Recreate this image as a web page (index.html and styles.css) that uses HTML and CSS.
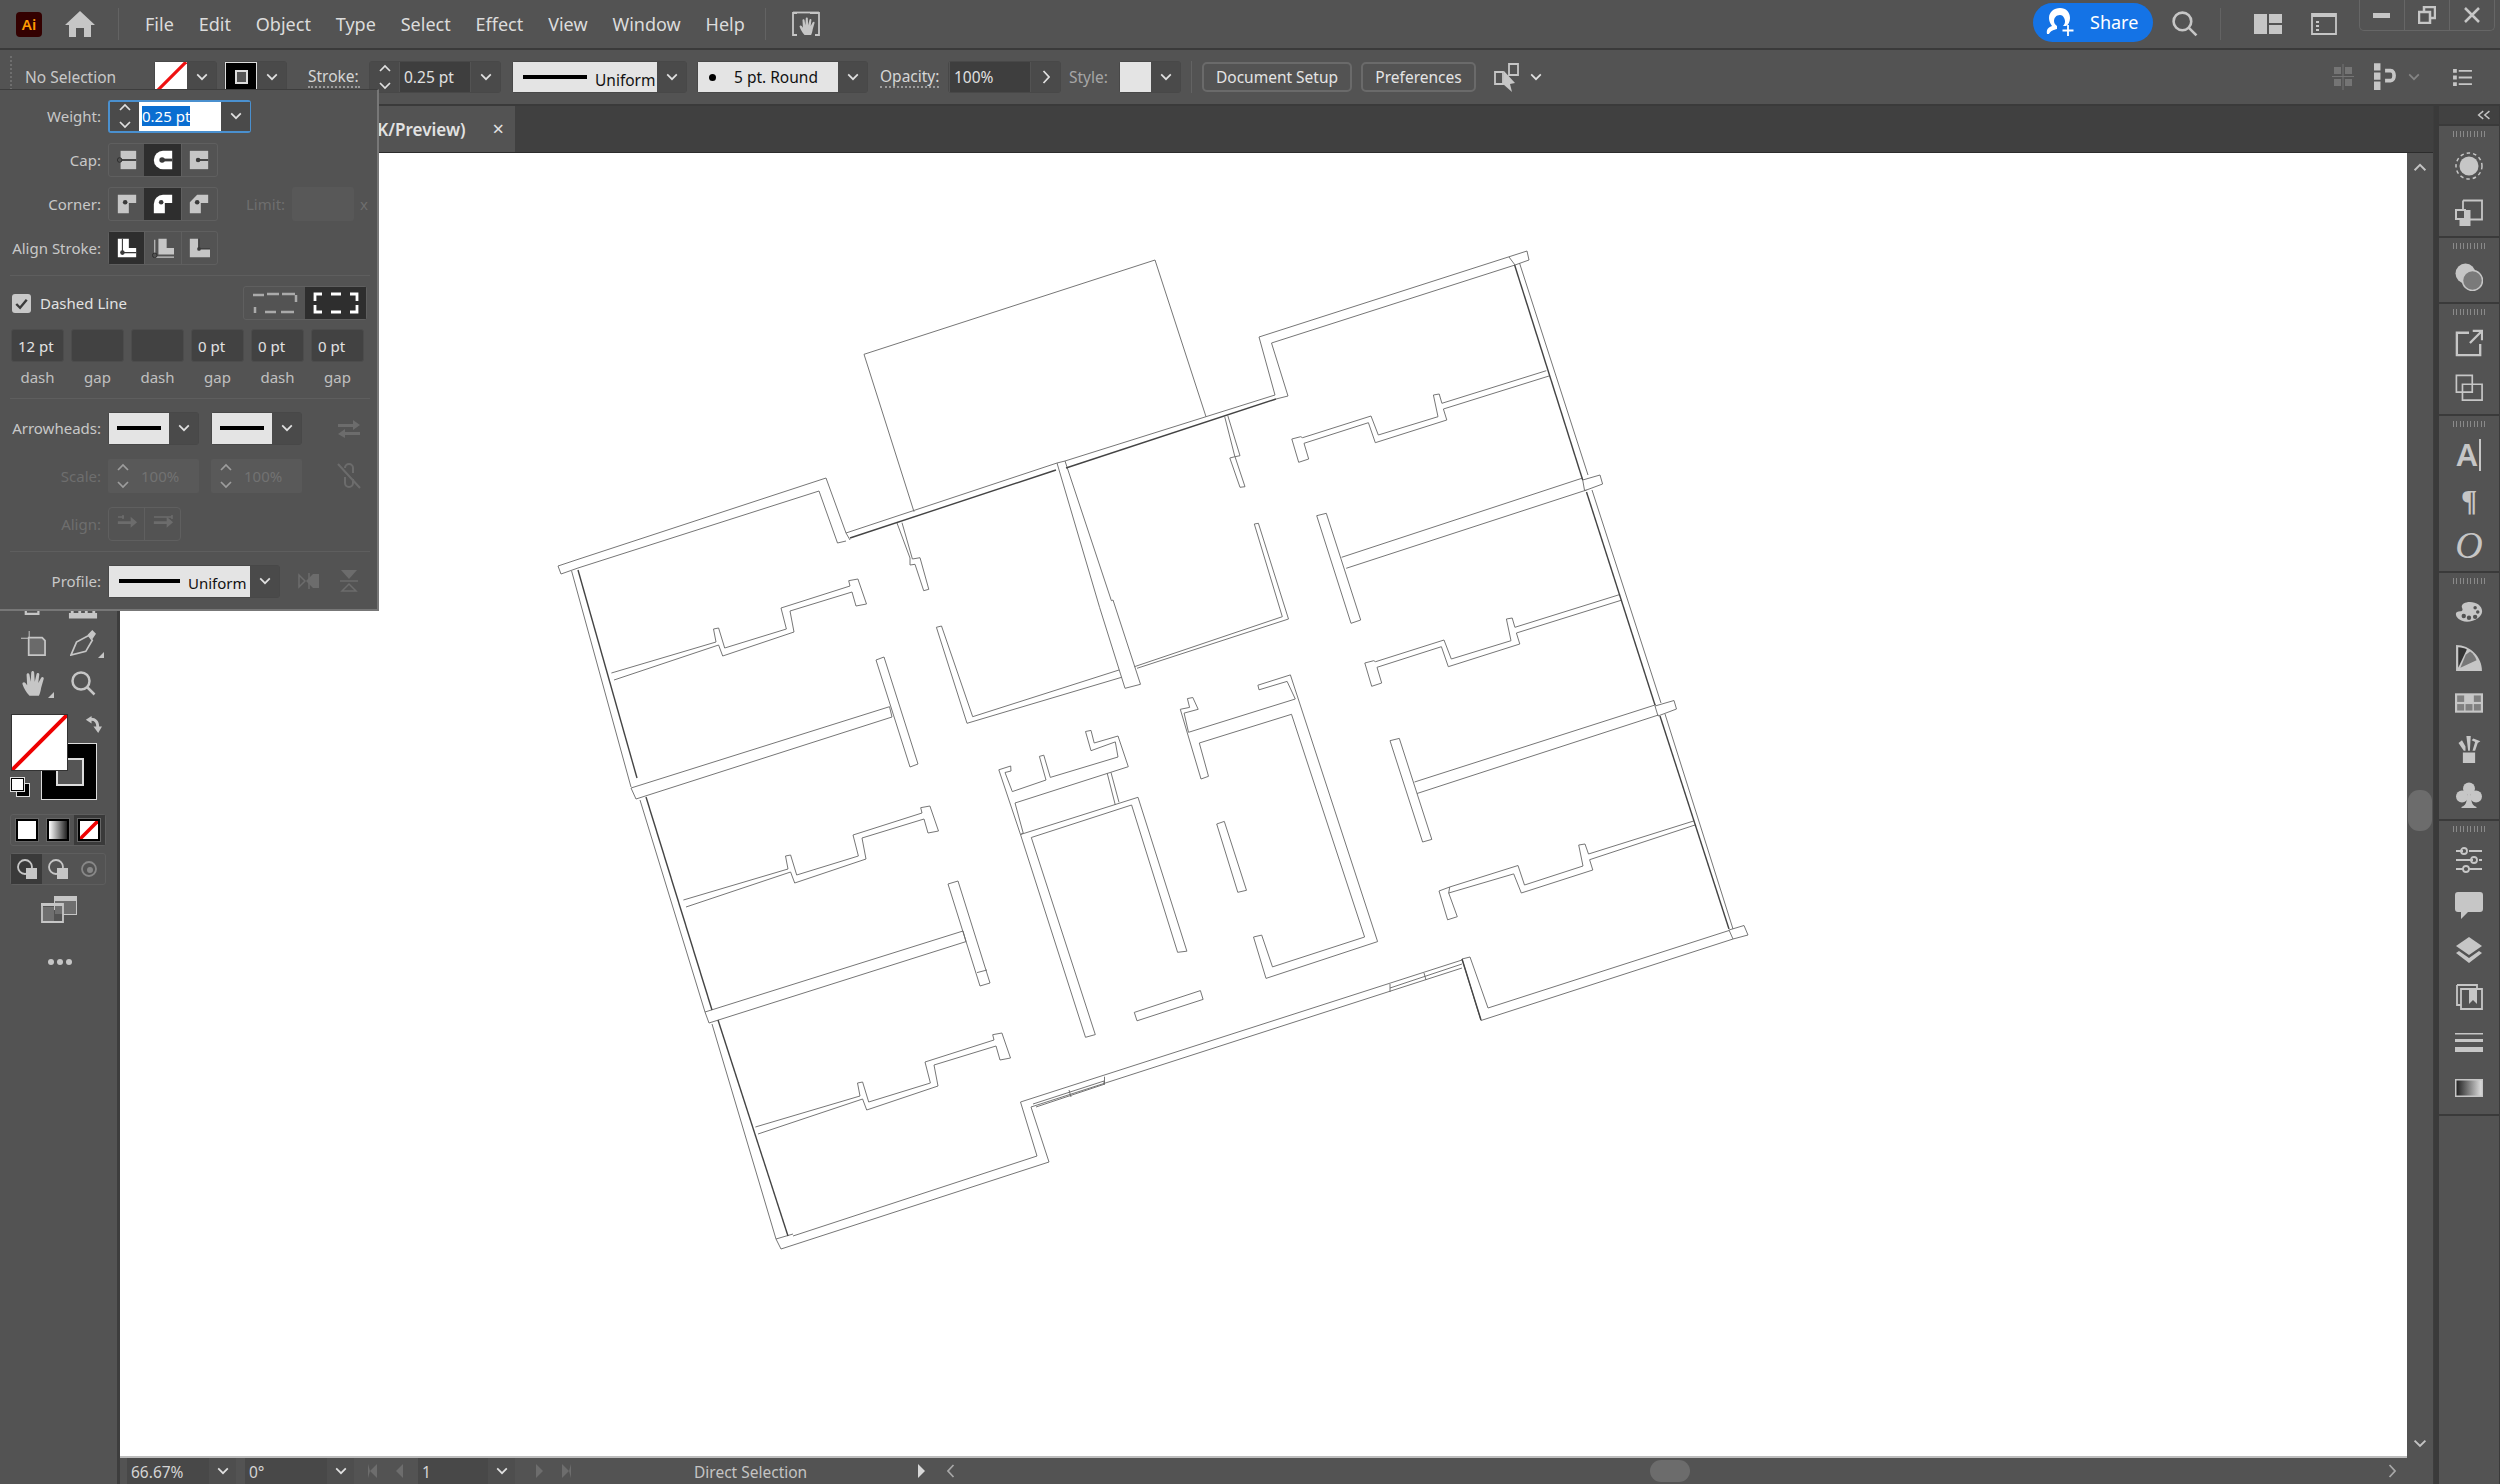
FILE: index.html
```html
<!DOCTYPE html>
<html lang="en">
<head>
<meta charset="utf-8">
<title>Illustrator</title>
<link rel="stylesheet" href="styles.css">
</head>
<body>
<svg class="defs" width="0" height="0" aria-hidden="true">
  <defs>
    <symbol id="chev" viewBox="0 0 12 8"><path class="ln" d="M1.2 1.4L6 6.2l4.8-4.8"/></symbol>
    <symbol id="up" viewBox="0 0 12 8"><path class="ln" d="M1.2 6.4L6 1.6l4.8 4.8"/></symbol>
    <symbol id="stepper" viewBox="0 0 14 28"><path class="ln" d="M2 8l5-5 5 5M2 20l5 5 5-5"/></symbol>
    <symbol id="home" viewBox="0 0 30 26"><path d="M15 0l15 14h-4v12h-7v-9h-8v9H4V14H0z"/></symbol>
    <symbol id="hand" viewBox="0 0 22 24"><path d="M8 23C5 20 3 16 2 13c-.5-1.5 1.5-2.5 2.5-1L6 14 5.500 5c0-1.800 2.300-1.800 2.500 0L9 11l.5-8c.1-1.800 2.400-1.800 2.500 0l.5 8L14 4.500c.3-1.700 2.500-1.400 2.400.3L15.500 12 18 7.500c.7-1.400 2.600-.6 2.200.9L18 16c-.5 3-1 5-2 7z"/></symbol>
    <symbol id="mag" viewBox="0 0 26 26"><circle class="ln2" cx="11" cy="11" r="8.500"/><path class="ln2" d="M17 17l7.500 7.500"/></symbol>
    <symbol id="capA" viewBox="0 0 24 24"><path d="M5 2h17v20H5z"/><path class="dk" d="M5 11h17v2H5z"/><circle class="dkring" cx="4" cy="12" r="2.500"/></symbol>
    <symbol id="capB" viewBox="0 0 24 24"><path d="M12 2h10v20H12a10 10 0 0 1 0-20z"/><path class="dk" d="M12 10.500h10v3H12z"/><circle class="dk" cx="11" cy="12" r="3"/></symbol>
    <symbol id="capC" viewBox="0 0 24 24"><path d="M2 2h20v20H2z"/><path class="dk" d="M11 11h11v2H11z"/><circle class="dk" cx="11" cy="12" r="2.500"/></symbol>
    <symbol id="corA" viewBox="0 0 24 24"><path d="M2 2h20v9h-8v11H2z"/><circle class="dk" cx="10" cy="10" r="2.500"/></symbol>
    <symbol id="corB" viewBox="0 0 24 24"><path d="M12 2h10v9h-8v11H2V12A10 10 0 0 1 12 2z"/><circle class="dk" cx="10" cy="10" r="2.500"/></symbol>
    <symbol id="corC" viewBox="0 0 24 24"><path d="M10 2h12v9h-8v11H2V10z"/><circle class="dk" cx="10" cy="10" r="2.500"/></symbol>
    <symbol id="alA" viewBox="0 0 24 24"><path d="M2 2h12v10h8v10H2z"/><path class="dkln" d="M7 2v15h15"/><circle class="dk" cx="7" cy="17" r="2.500"/></symbol>
    <symbol id="alB" viewBox="0 0 24 24"><path d="M7 2h9v10h8v7H7z"/><path class="ln1" d="M3 3v19h21"/><circle class="dkring" cx="3" cy="20" r="2.500"/></symbol>
    <symbol id="alC" viewBox="0 0 24 24"><path d="M2 2h9v11h13v9H2z"/><path class="dkln" d="M12 2v11h12"/><circle class="dk" cx="12" cy="13" r="2"/></symbol>
    <symbol id="dashA" viewBox="0 0 46 22"><path class="dash" d="M1 3h11M15 2h12M30 2h13M44 3v7M3 21v-6M13 20h11M29 20h13"/></symbol>
    <symbol id="dashB" viewBox="0 0 46 22"><path class="dashw" d="M2 9V2h7M18 2h10M37 2h7v7M2 13v7h7M18 20h10M37 20h7v-7"/></symbol>
    <symbol id="arrow" viewBox="0 0 24 22"><path d="M2 8h14V3l7 6-7 6v-4H2z" /></symbol>
    <symbol id="dock-app" viewBox="0 0 28 28"><circle cx="14" cy="14" r="9.500"/><circle class="dotted" cx="14" cy="14" r="13"/></symbol>
    <symbol id="dock-trans" viewBox="0 0 28 28"><path class="ln1b" d="M8 1.500h19v19H15"/><path class="ln1b" d="M8 1.500V10"/><rect x="4.500" y="11" width="11" height="16" class="fillbox"/><rect x="1" y="11" width="9" height="9" class="dkbox"/></symbol>
    <symbol id="dock-blend" viewBox="0 0 28 28"><circle cx="10.500" cy="10.500" r="10"/><circle class="blend" cx="17.500" cy="17.500" r="10"/></symbol>
    <symbol id="dock-export" viewBox="0 0 30 30"><path class="ln2b" d="M15 4H2v24h25V16"/><path class="ln2b" d="M16 15L28 3M19 2h10v10"/></symbol>
    <symbol id="dock-assets" viewBox="0 0 30 30"><path class="ln1b" d="M1.500 1.500h17v18h-17zM8 11h21v17H8z"/></symbol>
    <symbol id="dock-palette" viewBox="0 0 32 24"><path fill-rule="evenodd" d="M13 1c9-2 18 3 18 10 0 3-2 6-5 8-5 4-13 5-18 3C3 20 1 17 1 14c0-2 2-3 5-3 3 0 3-2 2-4-1-3 1-5 5-6zM10 14a2.500 2.500 0 1 0 0 5 2.500 2.500 0 0 0 0-5zm6 2a2.500 2.500 0 1 0 0 5 2.500 2.500 0 0 0 0-5zm7-1a2.500 2.500 0 1 0 0 5 2.500 2.500 0 0 0 0-5zm3-5a2 2 0 1 0 0 4 2 2 0 0 0 0-4zm-3-5a2 2 0 1 0 0 4 2 2 0 0 0 0-4z"/></symbol>
    <symbol id="dock-guide" viewBox="0 0 26 26"><path d="M1 1c13 0 24 11 24 24H1z"/><path class="dk2" d="M3 3c3 0 6 1 8 2L3 22z"/><path class="dk3" d="M10 10l4-3c3 2 5 5 6 8l-15 7z"/></symbol>
    <symbol id="dock-swatch" viewBox="0 0 26 18"><rect width="26" height="18"/><g class="tile"><rect x="2" y="2" width="6.500" height="6"/><rect x="17.500" y="2" width="6.500" height="6"/><rect x="2" y="10" width="6.500" height="6"/><rect x="9.750" y="10" width="6.500" height="6"/><rect x="17.500" y="10" width="6.500" height="6"/></g></symbol>
    <symbol id="dock-brush" viewBox="0 0 28 32"><path d="M7 20h14v12H7z"/><path d="M8 18L2 9l4-3 4 7v5zM13 18L11 1h5l-1 17zM18 18l3-10-4-2 2-2 8 3-3 2-3 9z"/></symbol>
    <symbol id="dock-club" viewBox="0 0 28 26"><circle cx="14" cy="6.500" r="6"/><circle cx="7" cy="14.500" r="6"/><circle cx="21" cy="14.500" r="6"/><path d="M12.500 12h3l1 7c.5 3 2 5 5 6v1H6.500v-1c3-1 4.500-3 5-6z"/></symbol>
    <symbol id="dock-slide" viewBox="0 0 28 26"><path class="ln1b" d="M1 4h7m6 0h13M1 13h17m6 0h3M1 22h7m6 0h13"/><circle class="ln1b" cx="9" cy="4" r="3"/><circle class="ln1b" cx="19" cy="13" r="3"/><circle class="ln1b" cx="11" cy="22" r="3"/></symbol>
    <symbol id="dock-comment" viewBox="0 0 28 28"><path d="M3 0h22a3 3 0 0 1 3 3v14a3 3 0 0 1-3 3H13l-7 7 0-7H3a3 3 0 0 1-3-3V3a3 3 0 0 1 3-3z"/></symbol>
    <symbol id="dock-layers" viewBox="0 0 28 28"><path d="M14 0l13 9-13 9L1 9z"/><path d="M4 14l10 7 10-7 3 2-13 10L1 16z"/></symbol>
    <symbol id="dock-lib" viewBox="0 0 28 28"><path class="ln1b" d="M2 2h20v4M6 6h21v20H6z M2 2v20h4"/><path d="M14 7h8v14l-4-4-4 4z"/></symbol>
    <symbol id="dock-stroke" viewBox="0 0 28 20"><path d="M0 0h28v1.500H0zM0 6h28v3H0zM0 14h28v5H0z"/></symbol>
    <symbol id="dock-grad" viewBox="0 0 28 18"><rect width="28" height="18"/><rect class="gradfill" x="1.500" y="1.500" width="25" height="15"/></symbol>
    <linearGradient id="gr" x1="0" x2="1" y1="0" y2="0"><stop offset="0" stop-color="#222"/><stop offset="1" stop-color="#ddd"/></linearGradient>
  </defs>
</svg>

<div class="app">
  <header class="titlebar">
    <div class="ai-logo">Ai</div>
    <svg class="ic home"><use href="#home"/></svg>
    <span class="vsep sep-home"></span>
    <nav class="menu">
      <span>File</span><span>Edit</span><span>Object</span><span>Type</span><span>Select</span><span>Effect</span><span>View</span><span>Window</span><span>Help</span>
    </nav>
    <span class="vsep sep-menu"></span>
    <svg class="ic arrange" viewBox="0 0 28 26"><path class="ln1b" d="M5 2H1v22h4M18 2h9v22h-4"/><path class="ln1b" d="M1 1.500h26"/><use href="#hand" x="6" y="4" width="18" height="22"/></svg>
    <div class="grow"></div>
    <button class="share">
      <svg class="share-ic" viewBox="0 0 30 30"><path class="u" d="M14 1c6 0 10 4 10 10 0 4-2 7-4 8h-3c2-2 2-4 2-5s-1-6-5-6-6 3-6 6c0 3 2 4 3 5v3c-3 1-6 1-8 5H1C0 22 3 20 6 19 4 16 3 14 3 11 3 5 8 1 14 1z"/><path class="uln" d="M22 18v11M16.500 23.500h11"/></svg>
      <span>Share</span>
    </button>
    <svg class="ic search"><use href="#mag"/></svg>
    <span class="vsep sep-search"></span>
    <svg class="ic layout" viewBox="0 0 28 20"><path d="M0 0h13v20H0zM15 0h13v9H15zM15 11h13v9H15z"/></svg>
    <svg class="ic panelwin" viewBox="0 0 26 22"><path class="ln1b" d="M1 1h24v20H1z"/><path d="M1 1h24v3H1zM5 8h3v2H5zM5 12h3v2H5zM5 16h3v2H5z"/></svg>
    <div class="winctl">
      <div class="wc"><svg class="ic wc-ic" viewBox="0 0 18 18"><path d="M0 7h17v5H0z"/></svg></div>
      <div class="wc"><svg class="ic wc-ic" viewBox="0 0 18 18"><path class="ln2b" d="M6 5V1h11v11h-5M1 6h11v11H1z"/></svg></div>
      <div class="wc"><svg class="ic wc-ic" viewBox="0 0 18 18"><path class="ln2b" d="M2 2l14 14M16 2L2 16"/></svg></div>
    </div>
  </header>

  <div class="controlbar">
    <span class="cgrip"></span>
    <span class="nosel">No Selection</span>
    <div class="combo c-fill">
      <span class="sw-none"><svg class="full" viewBox="0 0 30 30" preserveAspectRatio="none"><path class="red" d="M1 30L29 0"/></svg></span>
      <span class="cell"><svg class="chev"><use href="#chev"/></svg></span>
    </div>
    <div class="combo c-stroke">
      <span class="sw-stroke"><span class="sw-stroke-in"></span></span>
      <span class="cell"><svg class="chev"><use href="#chev"/></svg></span>
    </div>
    <span class="dlabel l-stroke">Stroke:</span>
    <div class="combo c-weight">
      <span class="cell step"><svg class="stepper"><use href="#stepper"/></svg></span>
      <span class="val v-weight">0.25 pt</span>
      <span class="cell"><svg class="chev"><use href="#chev"/></svg></span>
    </div>
    <div class="combo c-prof">
      <span class="lightbox lb-uni"><span class="bar bar-uni"></span><span class="blk">Uniform</span></span>
      <span class="cell"><svg class="chev"><use href="#chev"/></svg></span>
    </div>
    <div class="combo c-round">
      <span class="lightbox lb-round"><span class="dot"></span><span class="blk">5 pt. Round</span></span>
      <span class="cell"><svg class="chev"><use href="#chev"/></svg></span>
    </div>
    <span class="dlabel l-opacity">Opacity:</span>
    <div class="combo c-opac">
      <span class="val v-opac">100%</span>
      <span class="cell"><svg class="chev-r" viewBox="0 0 8 14"><path class="ln" d="M1.500 1l5.500 6-5.500 6"/></svg></span>
    </div>
    <span class="plain l-style">Style:</span>
    <div class="combo c-style">
      <span class="lightbox lb-style"></span>
      <span class="cell"><svg class="chev"><use href="#chev"/></svg></span>
    </div>
    <span class="vsep sep-style"></span>
    <button class="btn b-doc">Document Setup</button>
    <button class="btn b-pref">Preferences</button>
    <svg class="ic sel-ic" viewBox="0 0 28 30"><path class="ln1b" d="M2 10h8v12H2zM16 2h9v11h-9z"/><path d="M11 9l11 12-5 1 2 8-9-8z"/></svg>
    <svg class="chev chev-sel"><use href="#chev"/></svg>
    <div class="grow"></div>
    <svg class="ic grid-ic" viewBox="0 0 22 26"><g class="dim"><path d="M2 3h7v7H2zM13 3h7v7h-7zM2 15h7v7H2zM13 15h7v7h-7z"/><path d="M10.500 0h1v26h-1zM0 12h22v1H0z"/></g></svg>
    <svg class="ic mag-ic" viewBox="0 0 26 30"><path d="M0 0h7v8H0zM0 10h7v8H0zM0 20h7v9H0z"/><path class="ln3" d="M12 8h6c5 0 5 11 0 11h-6"/></svg>
    <svg class="chev chev-mag"><use href="#chev"/></svg>
    <svg class="ic list-ic" viewBox="0 0 20 18"><path d="M0 0h4v4H0zM0 7h4v4H0zM0 14h4v4H0zM6 1h14v2H6zM6 8h14v2H6zM6 15h14v2H6z"/></svg>
  </div>

  <div class="main">
    <aside class="tools">
      <div class="toolrow">
        <span class="tool"><svg class="ic t-a" viewBox="0 0 20 20"><path class="ln2b" d="M2 0v12h14V0"/><path d="M7 4h4v4H7z"/></svg></span>
        <span class="tool"><svg class="ic t-b" viewBox="0 0 32 14"><path d="M1 8h30v6H1zM3 0h3v8H3zM11 0h3v8h-3zM18 0h3v8h-3zM26 0h3v8h-3z"/></svg></span>
      </div>
      <div class="toolrow">
        <span class="tool"><svg class="ic t-c" viewBox="0 0 26 26"><path d="M8 0h1v7H8zM0 7h8v1H0z"/><path d="M8 7h14l3 3v15H8z" class="boxed"/></svg></span>
        <span class="tool"><svg class="ic t-d" viewBox="0 0 28 28"><path class="ln1b" d="M1 27l6-14L20 6l4 5-7 12z"/><path d="M19 5l5-5 4 4-4 6zM1 27l9-11"/></svg><i class="corner"></i></span>
      </div>
      <div class="toolrow">
        <span class="tool"><svg class="ic t-e"><use href="#hand"/></svg><i class="corner"></i></span>
        <span class="tool"><svg class="ic t-f"><use href="#mag"/></svg></span>
      </div>
      <div class="swatches">
        <span class="big-stroke"><span class="big-stroke-in"></span></span>
        <span class="big-fill"><svg class="full" viewBox="0 0 56 56" preserveAspectRatio="none"><path class="red3" d="M0 56L56 0"/></svg></span>
        <svg class="ic swap" viewBox="0 0 20 20"><path d="M9 1L3 5l6 4V6c3 0 5 2 5 6h-3l5 7 4-7h-3c0-6-4-9-8-9z"/></svg>
        <span class="def"><span class="def-s"></span><span class="def-f"></span></span>
      </div>
      <div class="mode-row">
        <span class="mode"><span class="mini mini-w"></span></span>
        <span class="mode"><span class="mini mini-g"></span></span>
        <span class="mode on"><span class="mini mini-n"><svg class="full" viewBox="0 0 20 20" preserveAspectRatio="none"><path class="red3" d="M0 20L20 0"/></svg></span></span>
      </div>
      <div class="mode-row draw-row">
        <span class="mode on"><svg class="ic dm" viewBox="0 0 22 22"><circle class="ln1b" cx="9" cy="9" r="7"/><path d="M10 10h11v11H10z"/></svg></span>
        <span class="mode"><svg class="ic dm" viewBox="0 0 22 22"><circle class="ln1b" cx="9" cy="9" r="7"/><path d="M10 10h11v11H10z"/></svg></span>
        <span class="mode"><svg class="ic dm dm-off" viewBox="0 0 22 22"><circle class="ln1b" cx="11" cy="11" r="7"/><circle cx="12" cy="12" r="3"/></svg></span>
      </div>
      <svg class="ic screen" viewBox="0 0 36 27"><path d="M13 0h23v19H22v-5H13z"/><path class="dim2" d="M14 5h21v13H14z"/><path class="ln1b" d="M1 8h21v18H1z"/><path d="M0 7h22v3H0z"/><path class="dim2" d="M2 11h11v14H2z"/></svg>
      <div class="more"><i></i><i></i><i></i></div>
    </aside>

    <div class="center">
      <div class="tabs">
        <div class="tab"><span class="tab-t">K/Preview)</span><span class="tab-x">×</span></div>
      </div>
      <div class="canvas-row">
        <div class="artboard">
          <svg class="plan" viewBox="120 153 2287 1303" width="2287" height="1303">
            <g class="w">
              <polyline points="914,511.700 864,354.300 1155,260 1206,416.700"/>
              <polyline points="576,560 558,566 561,574 578,568 819,491 837.500,543 846,541"/>
              <polyline points="576,560 826,478 846,533 1057,463 1065,461 1275,395 1259,337 1527,251 1529,260 1515,265 1271.500,343 1288,396 1276,399"/>
              <polyline points="846,533 850,540"/>
              <polyline points="1509,257 1515,265"/>
              <polyline points="1057,463 1099.700,607.700 1125,688.300 1140.500,684.300 1113,600 1111.400,600.700 1065,461"/>
              <polyline points="1519.500,263 1588,475"/>
              <polygon points="1582.700,480 1600,475 1602.600,484 1584.600,490.700"/>
              <polyline points="1592,490 1661,703"/>
              <polygon points="1655,706 1674,700.500 1676.500,709 1658,716"/>
              <polyline points="1665,714 1733,929"/>
              <polygon points="1729,930 1744,925.500 1748,935 1733,939"/>
              <polyline points="1733,939 1481,1020.500 1462,959 1470,957 1488,1008 1729,930.500"/>
              <polyline points="1462,960 1020.500,1102 1037,1156 793,1236"/>
              <polyline points="1462,968 1031,1107 1049,1162 781,1249 776,1239 793,1234"/>
              <polyline points="571.600,571 631,787"/>
              <polygon points="631,788 889.500,706.700 892,717 636,799"/>
              <polyline points="640,800 705,1012"/>
              <polygon points="705,1012 963,931 966,941.600 709,1023"/>
              <polyline points="712,1024 776,1239"/>
              <polygon points="876,660 884,657 918,764 910,767"/>
              <polygon points="948,884 958,881 990,983 980,986"/>
              <polyline points="977,972.600 987,970"/>
              <polygon points="1316.700,515.700 1326.300,513.300 1360.700,620 1351,623.300"/>
              <polyline points="1341.600,557.300 1582.700,478"/>
              <polyline points="1346.200,568.300 1586.500,490"/>
              <polygon points="1390,740.700 1399.300,738.400 1431.800,839.400 1422.600,842"/>
              <polyline points="1414.500,782 1656,704.700"/>
              <polyline points="1417,793.500 1658.400,715"/>
              <polyline points="897,523 910,558 910,565 915,564.300 923.700,590.700 928.800,589.300 920,557.700 912.400,559 902,522.700"/>
              <polyline points="1224.700,416.700 1234.900,456.700 1229.800,458 1240,487.300 1245,486.700 1235,456.700 1240,455.700 1227.800,415.700"/>
              <polyline points="1119,670 972.700,716.700 941.500,626 936.400,627.300 967,723.300 1121.600,677.300"/>
              <polyline points="1134.400,666.700 1282.300,616.700 1254.300,524 1258.400,523.300 1288.500,619 1137,668.300"/>
              <polyline points="1107.200,773.200 1115.300,805"/>
              <polyline points="1111,772.500 1119,802.300"/>
              <polygon points="1085.500,1037.300 1095.300,1034.600 1031.300,837.500 1131.600,805 1177.600,952.300 1186.900,951.200 1138,797.300 1020.500,834.500 998.800,769.800 1010.700,766 1011,771 1005,772.500 1012.300,791.600 1046,780 1039.400,756.400 1043.800,755.200 1050.300,777.400 1118,757 1115.300,741.900 1091,750.700 1085.500,731.500 1091,730.400 1094.200,743 1118,736 1128.300,766.700 1015,803 1023.200,833 1020.500,834.500"/>
              <polygon points="1180.300,709.300 1189.600,707.400 1187.400,698.600 1192.800,697.500 1198.200,709.300 1184.100,713.100 1188.500,732.300 1295.300,699 1287.100,681.400 1259,689.800 1257.900,685.200 1290.400,674.900 1377.600,941.600 1266,978.400 1253.500,937 1261.700,935.100 1272.500,966.900 1364.600,937 1291.500,714.300 1199.300,743 1208.500,776.300 1201,779"/>
              <polygon points="1216.700,824 1224.300,821.400 1246.500,890.300 1237.800,892.300"/>
              <polygon points="1134.300,1012.400 1200.400,990.600 1203.100,999.400 1137,1020.800"/>
              <polygon points="1449.700,887 1439,891 1447.600,919.800 1457.300,916.700 1448.700,893"/>
              <polyline points="1449.700,887 1518,865.500 1524.500,885 1583,866 1578.700,845 1585,844 1588.500,854 1693.600,821"/>
              <polyline points="1448.700,893 1513.700,873.900 1521.300,893 1592.800,870 1589.600,859.700 1695,825"/>
              <g id="roomL">
                <polyline points="611.400,673 716,642 713.500,629 718.600,628 724.700,648 786.400,629 781,608 850,586 848.700,580.700 857.900,579 866.500,604 856,606 852,592 790,611 794,632 722.700,656 718.600,645 614,680"/>
              </g>
              <use href="#roomL" x="72" y="227"/>
              <use href="#roomL" x="144" y="454"/>
              <g id="roomR">
                <polyline points="1546.300,370.700 1441.900,403.300 1439.200,394 1433.400,395 1438,416.700 1378.300,435 1371,416 1302.600,437.700 1300.700,436.700 1291.800,439 1298.700,462.300 1308.700,459 1304,443.300 1368.400,422.700 1375.300,442.700 1446.800,420 1443.400,409 1549,376"/>
              </g>
              <use href="#roomR" x="73" y="224"/>
              <polyline points="1033,1104 1104,1081 1104,1084"/>
              <polyline points="1036,1107 1105,1084"/>
              <polyline points="1390,984 1390,992"/>
              <polyline points="1104.500,1076.700 1104.500,1084.400"/>
              <polyline points="1069,1090 1071,1097"/>
              <polyline points="1424,973 1426,980"/>
              <polyline points="1390,988 1462,964"/>
            </g>
            <g class="gl">
              <polyline points="850,538 1056,470"/>
              <polyline points="1066,468 1276,399"/>
              <polyline points="578,570 637,778"/>
              <polyline points="646,797 712,1010"/>
              <polyline points="718,1020 788,1236"/>
              <polyline points="1514.600,265 1582.700,480"/>
              <polyline points="1586.500,492 1655,705"/>
              <polyline points="1660,716 1729,929"/>
              <polyline points="1462,959 1481,1020"/>
            </g>
          </svg>
        </div>
        <div class="vscroll">
          <svg class="sc-up"><use href="#up"/></svg>
          <span class="sc-thumb"></span>
          <svg class="sc-down"><use href="#chev"/></svg>
        </div>
      </div>
      <footer class="status">
        <span class="st-box st-zoom">66.67%</span><span class="st-chev"><svg class="chev"><use href="#chev"/></svg></span>
        <span class="st-box st-rot">0°</span><span class="st-chev"><svg class="chev"><use href="#chev"/></svg></span>
        <span class="st-nav"><i class="tri-l bar-l"></i><i class="tri-l"></i></span>
        <span class="st-box st-page">1</span><span class="st-chev"><svg class="chev"><use href="#chev"/></svg></span>
        <span class="st-nav st-nav2"><i class="tri-r"></i><i class="tri-r bar-r"></i></span>
        <span class="st-label">Direct Selection</span>
        <i class="tri-r on"></i>
        <svg class="st-left" viewBox="0 0 8 14"><path class="ln" d="M6.500 1L1 7l5.500 6"/></svg>
        <div class="hscroll"><span class="h-thumb"></span><svg class="st-right" viewBox="0 0 8 14"><path class="ln" d="M1.500 1L7 7l-5.500 6"/></svg></div>
      </footer>
    </div>

    <aside class="dock">
      <div class="dock-head"><svg class="collapse" viewBox="0 0 18 12"><path class="ln1b" d="M8 1L2 6l6 5M16 1l-6 5 6 5"/></svg></div>
      <div class="dgroup g1">
        <span class="grip"></span>
        <span class="slot s47"><svg class="ic di"><use href="#dock-app"/></svg></span>
        <span class="slot s47"><svg class="ic di"><use href="#dock-trans"/></svg></span>
      </div>
      <div class="dgroup g2">
        <span class="grip"></span>
        <span class="slot"><svg class="ic di"><use href="#dock-blend"/></svg></span>
      </div>
      <div class="dgroup g3">
        <span class="grip"></span>
        <span class="slot"><svg class="ic di"><use href="#dock-export"/></svg></span>
        <span class="slot"><svg class="ic di"><use href="#dock-assets"/></svg></span>
      </div>
      <div class="dgroup g4">
        <span class="grip"></span>
        <span class="slot glyph g-a">A<i class="caret"></i></span>
        <span class="slot glyph g-p">¶</span>
        <span class="slot glyph g-o">O</span>
      </div>
      <div class="dgroup g5">
        <span class="grip"></span>
        <span class="slot s46"><svg class="ic di"><use href="#dock-palette"/></svg></span>
        <span class="slot s46"><svg class="ic di"><use href="#dock-guide"/></svg></span>
        <span class="slot s46"><svg class="ic di"><use href="#dock-swatch"/></svg></span>
        <span class="slot s46"><svg class="ic di"><use href="#dock-brush"/></svg></span>
        <span class="slot s46"><svg class="ic di"><use href="#dock-club"/></svg></span>
      </div>
      <div class="dgroup g6">
        <span class="grip"></span>
        <span class="slot s46"><svg class="ic di"><use href="#dock-slide"/></svg></span>
        <span class="slot s46"><svg class="ic di"><use href="#dock-comment"/></svg></span>
        <span class="slot s46"><svg class="ic di"><use href="#dock-layers"/></svg></span>
        <span class="slot s46"><svg class="ic di"><use href="#dock-lib"/></svg></span>
        <span class="slot s46"><svg class="ic di"><use href="#dock-stroke"/></svg></span>
        <span class="slot s46"><svg class="ic di"><use href="#dock-grad"/></svg></span>
      </div>
      <div class="dgroup g7"></div>
    </aside>
  </div>

  <section class="stroke-panel">
    <div class="sp-row">
      <span class="sp-label">Weight:</span>
      <div class="combo focus c-w2">
        <span class="cell step2"><svg class="stepper"><use href="#stepper"/></svg></span>
        <span class="input-on"><span class="selected">0.25 pt</span></span>
        <span class="cell cell30"><svg class="chev"><use href="#chev"/></svg></span>
      </div>
    </div>
    <div class="sp-row">
      <span class="sp-label">Cap:</span>
      <div class="seg">
        <span class="sg"><svg class="ic si"><use href="#capA"/></svg></span>
        <span class="sg on"><svg class="ic si wh"><use href="#capB"/></svg></span>
        <span class="sg"><svg class="ic si"><use href="#capC"/></svg></span>
      </div>
    </div>
    <div class="sp-row">
      <span class="sp-label">Corner:</span>
      <div class="seg">
        <span class="sg"><svg class="ic si"><use href="#corA"/></svg></span>
        <span class="sg on"><svg class="ic si wh"><use href="#corB"/></svg></span>
        <span class="sg"><svg class="ic si"><use href="#corC"/></svg></span>
      </div>
      <span class="off limit">Limit:</span>
      <span class="off-box limit-box"></span>
      <span class="off x">x</span>
    </div>
    <div class="sp-row">
      <span class="sp-label">Align Stroke:</span>
      <div class="seg">
        <span class="sg on"><svg class="ic si wh"><use href="#alA"/></svg></span>
        <span class="sg"><svg class="ic si"><use href="#alB"/></svg></span>
        <span class="sg"><svg class="ic si"><use href="#alC"/></svg></span>
      </div>
    </div>
    <hr class="sp-hr">
    <div class="sp-dash">
      <span class="check"><svg class="full" viewBox="0 0 20 20"><path class="tick" d="M4.500 10.500l4 4 7-8.500"/></svg></span>
      <span class="dash-label">Dashed Line</span>
      <div class="dash-tog">
        <span class="dt"><svg class="dti"><use href="#dashA"/></svg></span>
        <span class="dt on"><svg class="dti"><use href="#dashB"/></svg></span>
      </div>
    </div>
    <div class="dash-grid">
      <span class="di-box">12 pt</span><span class="di-box"></span><span class="di-box"></span><span class="di-box">0 pt</span><span class="di-box">0 pt</span><span class="di-box">0 pt</span>
      <span class="di-l">dash</span><span class="di-l">gap</span><span class="di-l">dash</span><span class="di-l">gap</span><span class="di-l">dash</span><span class="di-l">gap</span>
    </div>
    <hr class="sp-hr">
    <div class="sp-row mt2">
      <span class="sp-label">Arrowheads:</span>
      <div class="combo c-arrow">
        <span class="lightbox lb-arrow"><span class="bar bar-arrow"></span></span>
        <span class="cell"><svg class="chev"><use href="#chev"/></svg></span>
      </div>
      <div class="combo c-arrow c-gap">
        <span class="lightbox lb-arrow"><span class="bar bar-arrow"></span></span>
        <span class="cell"><svg class="chev"><use href="#chev"/></svg></span>
      </div>
      <svg class="ic off-ic swap-ic" viewBox="0 0 22 20"><path d="M0 6h15V2l7 5-7 5V9H0zM22 14H7v-3l-7 5 7 4v-3h15z"/></svg>
    </div>
    <div class="sp-row mt4">
      <span class="sp-label off">Scale:</span>
      <div class="off-combo">
        <span class="off-step"><svg class="stepper off-s"><use href="#stepper"/></svg></span><span class="off-val">100%</span>
      </div>
      <div class="off-combo c-gap">
        <span class="off-step"><svg class="stepper off-s"><use href="#stepper"/></svg></span><span class="off-val">100%</span>
      </div>
      <svg class="ic off-ic link-ic" viewBox="0 0 24 26"><path class="ln2o" d="M8 5a4 4 0 0 1 8 0v5M8 14v6a4 4 0 0 0 8 0v-4M1 1l22 24"/></svg>
    </div>
    <div class="sp-row mt4">
      <span class="sp-label off">Align:</span>
      <div class="off-seg">
        <span class="os"><svg class="ic off-ic al-ic" viewBox="0 0 22 22"><path class="ln1o" d="M2 4h6M7 2v4"/><use href="#arrow"/></svg></span>
        <span class="os"><svg class="ic off-ic al-ic" viewBox="0 0 22 22"><path class="ln1o" d="M2 4h18M20 2v4"/><use href="#arrow"/></svg></span>
      </div>
    </div>
    <hr class="sp-hr">
    <div class="sp-row mt2">
      <span class="sp-label">Profile:</span>
      <div class="combo c-profile">
        <span class="lightbox lb-profile"><span class="bar bar-profile"></span><span class="blk">Uniform</span></span>
        <span class="cell"><svg class="chev"><use href="#chev"/></svg></span>
      </div>
      <svg class="ic off-ic flip1" viewBox="0 0 22 16"><path d="M15 1l6-0v14l-6 0-0-0L8 8z" /><path class="ln1o" d="M1 2v12l6-6zM11 0v16"/></svg>
      <svg class="ic off-ic flip2" viewBox="0 0 18 24"><path d="M1 1h16L9 10z"/><path class="ln1o" d="M0 12h18M2 22h14L9 15z"/></svg>
    </div>
  </section>
</div>
</body>
</html>
```

FILE: styles.css
```css
* { box-sizing: border-box; }
html, body { margin: 0; padding: 0; height: 100%; overflow: hidden; background: #535353; }
body { font-family: "Noto Sans", "Open Sans", sans-serif; color: #d8d8d8; font-size: 16px; }
.defs { position: absolute; }
.app { position: relative; display: flex; flex-direction: column; width: 2500px; height: 1484px; }
.grow { flex: 1; }
button { font: inherit; }

/* shared vector classes */
.ic { fill: #c6c6c6; display: block; flex: none; }
.ln { fill: none; stroke: #e0e0e0; stroke-width: 1.700; }
.ln1 { fill: none; stroke: #c6c6c6; stroke-width: 1.200; }
.ln1b { fill: none; stroke: #c6c6c6; stroke-width: 1.800; }
.ln2 { fill: none; stroke: #c6c6c6; stroke-width: 2.500; }
.ln2b { fill: none; stroke: #c6c6c6; stroke-width: 2.500; }
.ln3 { fill: none; stroke: #c6c6c6; stroke-width: 4; }
.ln2o { fill: none; stroke: #6c6c6c; stroke-width: 2; }
.ln1o { fill: none; stroke: #6c6c6c; stroke-width: 1.500; }
.dk { fill: #3a3a3a; }
.dkring { fill: #535353; stroke: #2c2c2c; stroke-width: 1; }
.dkln { fill: none; stroke: #3a3a3a; stroke-width: 1.200; }
.dim { fill: #757575; }
.dim2 { fill: #6f6f6f; }
.red { fill: none; stroke: #e11; stroke-width: 3; }
.red3 { fill: none; stroke: #e00; stroke-width: 4; }
.full { display: block; width: 100%; height: 100%; }
.chev { display: block; width: 12px; height: 8px; flex: none; }
.chev-r { display: block; width: 8px; height: 14px; }
.stepper { display: block; width: 14px; height: 28px; }
.vsep { display: block; width: 1px; height: 32px; background: #636363; flex: none; }

/* title bar */
.titlebar { display: flex; align-items: center; height: 50px; flex: none; background: #535353; border-bottom: 2px solid #3a3a3a; padding-left: 16px; }
.ai-logo { width: 26px; height: 25px; border-radius: 4px; background: #330000; color: #ff9a00; font-family: "Noto Sans", sans-serif; font-size: 15px; font-weight: 600; display: flex; align-items: center; justify-content: center; }
.home { width: 30px; height: 26px; margin-left: 23px; }
.sep-home { margin-left: 23px; }
.menu { display: flex; gap: 24.900px; margin-left: 26px; font-size: 18px; color: #dcdcdc; }
.sep-menu { margin-left: 20px; }
.arrange { width: 28px; height: 26px; margin-left: 26px; }
.share { display: flex; align-items: center; gap: 14px; width: 120px; height: 39px; margin-top: -4px; padding: 0 0 0 13px; border: 0; border-radius: 20px; background: #1473e6; color: #fff; font-size: 18px; }
.share-ic { width: 30px; height: 30px; flex: none; }
.u { fill: #fff; }
.uln { fill: none; stroke: #fff; stroke-width: 1.800; }
.search { width: 27px; height: 27px; margin-left: 18px; margin-top: -2px; }
.sep-search { margin-left: 22px; }
.layout { width: 28px; height: 20px; margin-left: 33px; }
.panelwin { width: 26px; height: 22px; margin-left: 29px; }
.winctl { display: flex; align-items: center; width: 136px; height: 31px; margin: -18px 5px 0 22px; border: 1px solid #666; border-top: 0; border-radius: 0 0 5px 5px; }
.wc { flex: 1; height: 100%; display: flex; align-items: center; justify-content: center; border-left: 1px solid #666; }
.wc:first-child { border-left: 0; }
.wc-ic { width: 18px; height: 18px; }

/* control bar */
.controlbar { display: flex; align-items: center; height: 56px; flex: none; background: #535353; border-bottom: 2px solid #3a3a3a; font-size: 15.500px; padding-left: 10px; }
.cgrip { display: block; width: 3px; height: 42px; border-left: 2px dotted #6e6e6e; }
.nosel { margin-left: 12px; width: 92px; color: #c8c8c8; white-space: nowrap; }
.combo { display: flex; align-items: stretch; height: 32px; border: 1px solid #484848; border-radius: 3px; background: #4a4a4a; flex: none; }
.cell { display: flex; align-items: center; justify-content: center; width: 29px; flex: none; background: #4a4a4a; }
.val { display: flex; align-items: center; padding-left: 4px; background: #3e3e3e; color: #e0e0e0; border-left: 1px solid #535353; border-right: 1px solid #535353; }
.c-fill { margin-left: 37px; width: 63px; }
.c-stroke { margin-left: 7px; width: 63px; }
.sw-none { display: block; width: 32px; background: #fff; }
.sw-stroke { display: flex; align-items: center; justify-content: center; width: 32px; background: #000; border: 1px solid #ddd; }
.sw-stroke-in { display: block; width: 13px; height: 14px; border: 2px solid #ddd; background: #555; }
.dlabel { border-bottom: 2px dotted #9a9a9a; line-height: 20px; color: #d6d6d6; white-space: nowrap; }
.plain { color: #a6a6a6; white-space: nowrap; }
.l-stroke { margin-left: 21px; width: 52px; }
.c-weight { margin-left: 9px; width: 132px; }
.step { width: 29px; }
.v-weight { width: 72px; }
.c-prof { margin-left: 11px; width: 175px; }
.lightbox { display: flex; align-items: center; background: #e4e4e4; color: #111; flex: 1; }
.blk { color: #111; white-space: nowrap; }
.bar { display: block; background: #000; height: 4px; flex: none; }
.bar-uni { width: 64px; margin: 0 8px 0 10px; }
.lb-uni .blk { position: relative; top: 3px; }
.c-round { margin-left: 10px; width: 171px; }
.dot { width: 7px; height: 7px; border-radius: 50%; background: #000; margin: 0 18px 0 11px; flex: none; }
.l-opacity { margin-left: 12px; width: 59px; }
.c-opac { margin-left: 9px; width: 113px; }
.v-opac { width: 83px; }
.l-style { margin-left: 8px; width: 41px; }
.c-style { margin-left: 9px; width: 62px; }
.sep-style { margin-left: 10px; }
.btn { display: block; height: 30px; padding: 0; border: 2px solid #6a6a6a; border-radius: 5px; background: #535353; color: #e4e4e4; font-size: 15.500px; white-space: nowrap; }
.b-doc { margin-left: 10px; width: 150px; }
.b-pref { margin-left: 9px; width: 115px; }
.sel-ic { width: 28px; height: 30px; margin-left: 17px; }
.chev-sel { margin-left: 9px; }
.grid-ic { width: 22px; height: 26px; }
.mag-ic { width: 24px; height: 28px; margin-left: 20px; }
.chev-mag { margin-left: 10px; opacity: .35; }
.list-ic { width: 19px; height: 17px; margin: 0 28px 0 33px; }

/* main area */
.main { display: flex; flex: 1; min-height: 0; }
.tools { display: flex; flex-direction: column; width: 120px; flex: none; padding: 477px 0 0; background: #535353; border-right: 3px solid #3d3d3d; }
.toolrow { display: flex; height: 40px; padding-left: 8px; }
.tool { position: relative; display: flex; align-items: center; justify-content: center; width: 50px; }
.corner { position: absolute; right: 4px; bottom: 5px; width: 0; height: 0; border-style: solid; border-width: 0 0 6px 6px; border-color: transparent transparent #c6c6c6 transparent; }
.t-a { width: 18px; height: 18px; margin-top: 18px; }
.t-b { width: 30px; height: 14px; margin-top: 18px; }
.t-c { width: 25px; height: 25px; }
.boxed { fill: #6a6a6a; stroke: #c6c6c6; stroke-width: 1.800; }
.t-d { width: 26px; height: 26px; }
.t-e { width: 26px; height: 28px; }
.t-f { width: 26px; height: 26px; }
.swatches { position: relative; height: 100px; flex: none; margin-top: 7px; }
.big-fill { position: absolute; left: 11px; top: 4px; width: 57px; height: 57px; background: #fff; border: 1px solid #333; }
.big-stroke { position: absolute; left: 41px; top: 33px; width: 56px; height: 57px; background: #000; border: 1px solid #ddd; display: flex; align-items: center; justify-content: center; padding: 0 0 0 1px; }
.big-stroke-in { display: block; width: 28px; height: 28px; background: #555; border: 2px solid #ddd; }
.swap { position: absolute; left: 83px; top: 5px; width: 19px; height: 19px; }
.def { position: absolute; left: 11px; top: 68px; width: 19px; height: 19px; }
.def-s { position: absolute; right: 0; bottom: 0; width: 14px; height: 14px; background: #000; border: 1px solid #ddd; }
.def-f { position: absolute; left: 0; top: 0; width: 13px; height: 13px; background: #fff; border: 1px solid #000; outline: 1px solid #ddd; }
.mode-row { display: flex; width: 96px; height: 32px; margin: 4px 0 0 10px; border: 1px solid #5e5e5e; border-radius: 3px; flex: none; }
.draw-row { margin-top: 7px; }
.mode { flex: 1; display: flex; align-items: center; justify-content: center; }
.mode.on { background: #3a3a3a; }
.mini { display: block; width: 22px; height: 22px; border: 2px solid #000; outline: 1px solid #666; }
.mini-w { background: #fff; }
.mini-g { background: linear-gradient(90deg, #fff, #222); }
.mini-n { background: #fff; overflow: hidden; }
.dm { width: 22px; height: 22px; }
.dm-off { opacity: .45; }
.screen { width: 36px; height: 27px; margin: 11px 0 0 41px; }
.more { display: flex; gap: 3px; margin: 36px 0 0 48px; }
.more i { display: block; width: 6px; height: 6px; border-radius: 50%; background: #c6c6c6; }

/* centre */
.center { display: flex; flex-direction: column; flex: 1; min-width: 0; }
.tabs { height: 47px; flex: none; background: #404040; border-bottom: 1px solid #2c2c2c; }
.tab { display: flex; align-items: center; justify-content: flex-end; width: 395px; height: 46px; padding-right: 11px; background: #535353; }
.tab-t { font-size: 17px; font-weight: 600; color: #e2e2e2; white-space: nowrap; }
.tab-x { margin-left: 27px; font-size: 20px; line-height: 20px; color: #e2e2e2; }
.canvas-row { display: flex; flex: 1; min-height: 0; }
.artboard { width: 2287px; flex: none; background: #fff; border-bottom: 2px solid #bdbdbd; overflow: hidden; }
.plan { display: block; }
.w { fill: none; stroke: #666; stroke-width: .9; }
.gl { fill: none; stroke: #444; stroke-width: 1.400; }
.vscroll { position: relative; flex: 1; background: #535353; display: flex; flex-direction: column; align-items: center; }
.sc-up { display: block; width: 14px; height: 9px; margin-top: 10px; opacity: .8; }
.sc-thumb { position: absolute; left: 1px; top: 637px; width: 24px; height: 41px; border-radius: 11px; background: #6c6c6c; }
.sc-down { position: absolute; left: 6px; bottom: 10px; width: 14px; height: 9px; opacity: .8; }
.status { display: flex; align-items: center; height: 26px; flex: none; background: #535353; font-size: 15.500px; color: #d4d4d4; padding-left: 7px; }
.st-box { display: flex; align-items: center; height: 26px; background: #484848; padding: 2px 0 0 4px; white-space: nowrap; }
.st-zoom { width: 82px; }
.st-rot { width: 82px; margin-left: 9px; }
.st-page { width: 70px; margin-left: 6px; }
.st-chev { display: flex; align-items: center; justify-content: center; width: 27px; height: 26px; background: #4e4e4e; }
.st-nav { display: flex; align-items: center; gap: 19px; width: 58px; height: 26px; padding-left: 14px; flex: none; }
.st-nav2 { padding-left: 12px; width: 62px; margin-left: 9px; gap: 19px; }
.tri-l { display: block; width: 0; height: 0; border-style: solid; border-width: 7px 7px 7px 0; border-color: transparent #6d6d6d transparent transparent; flex: none; }
.tri-r { display: block; width: 0; height: 0; border-style: solid; border-width: 7px 0 7px 7px; border-color: transparent transparent transparent #6d6d6d; flex: none; }
.bar-l { border-left: 2px solid #6d6d6d; width: 9px; }
.bar-r { border-right: 2px solid #6d6d6d; width: 9px; }
.st-label { width: 224px; padding: 2px 0 0 108px; color: #c4c4c4; white-space: nowrap; flex: none; box-sizing: content-box; }
.tri-r.on { border-left-color: #d8d8d8; margin-left: 0; flex: none; }
.st-left { display: block; width: 8px; height: 14px; margin-left: 22px; flex: none; opacity: .6; }
.hscroll { position: relative; flex: 1; height: 26px; }
.h-thumb { position: absolute; left: 695px; top: 2px; width: 40px; height: 22px; border-radius: 11px; background: #6c6c6c; }
.st-right { position: absolute; right: 37px; top: 6px; width: 8px; height: 14px; opacity: .6; }

/* dock */
.dock { display: flex; flex-direction: column; gap: 2px; width: 67px; flex: none; background: #3a3a3a; padding: 0 1px 0 5px; border-left: 1px solid #3d3d3d; }
.dock-head { display: flex; align-items: center; justify-content: flex-end; height: 18px; flex: none; padding-right: 8px; background: #414141; }
.collapse { display: block; width: 14px; height: 10px; }
.dgroup { display: flex; flex-direction: column; align-items: center; background: #535353; flex: none; }
.g1 { height: 110px; }
.g2 { height: 64px; }
.g3 { height: 110px; }
.g4 { height: 155px; }
.g5 { height: 246px; }
.g6 { height: 293px; }
.g7 { flex: 1; }
.grip { display: block; width: 32px; height: 6px; margin: 5px 0 5px; flex: none; background: repeating-linear-gradient(90deg, #8a8a8a 0, #8a8a8a 1px, transparent 1px, transparent 3.500px); }
.slot { display: flex; align-items: center; justify-content: center; height: 45px; width: 100%; flex: none; }
.s46 { height: 45.700px; }
.s47 { height: 47px; }
.di { width: 28px; height: 28px; }
.dotted { fill: none; stroke: #c6c6c6; stroke-width: 1.500; stroke-dasharray: 3.500 3; }
.fillbox { fill: #c6c6c6; }
.dkbox { fill: #535353; stroke: #c6c6c6; stroke-width: 2; }
.blend { fill: #7a7a7a; stroke: #c6c6c6; stroke-width: 1.500; }
.dk2 { fill: #333; }
.dk3 { fill: #777; }
.tile { fill: #7f7f7f; }
.gradfill { fill: url(#gr); }
.glyph { color: #c6c6c6; line-height: 1; }
.g-a { font-size: 31px; font-weight: 600; }
.caret { display: block; width: 2px; height: 32px; background: #c6c6c6; margin-left: 2px; }
.g-p { font-family: "Liberation Serif", serif; font-size: 30px; font-weight: 700; }
.g-o { font-family: "Liberation Serif", serif; font-size: 38px; font-style: italic; }

/* stroke panel */
.stroke-panel { position: absolute; left: 0; top: 89px; display: flex; flex-direction: column; gap: 10px; width: 379px; height: 522px; padding-top: 9px; background: #535353; border-top: 1px solid #3d3d3d; border-right: 2px solid #777; border-bottom: 2px solid #777; font-size: 15px; color: #c8c8c8; }
.sp-row { display: flex; align-items: center; height: 34px; flex: none; }
.sp-label { width: 101px; flex: none; text-align: right; white-space: nowrap; margin-right: 7px; color: #c8c8c8; }
.sp-hr { width: 360px; height: 1px; margin: 0 0 0 10px; border: 0; background: #5e5e5e; flex: none; }
.focus { border: 2px solid #4a90cf; }
.c-w2 { width: 143px; height: 33px; }
.step2 { width: 29px; }
.cell30 { width: 29px; }
.input-on { display: flex; align-items: center; width: 82px; padding-left: 3px; background: #fff; flex: none; }
.selected { background: #0a6ed1; color: #fff; line-height: 20px; white-space: nowrap; }
.seg { display: flex; width: 110px; height: 34px; border: 1px solid #5f5f5f; border-radius: 3px; flex: none; }
.sg { flex: 1; display: flex; align-items: center; justify-content: center; border-left: 1px solid #5f5f5f; }
.sg:first-child { border-left: 0; }
.sg.on { background: #2e2e2e; border-color: #2e2e2e; }
.si { width: 22px; height: 22px; }
.wh { fill: #fff; }
.off { color: #6e6e6e; }
.limit { margin-left: 28px; }
.limit-box { display: block; width: 62px; height: 34px; margin-left: 7px; }
.off-box { background: #585858; border-radius: 3px; }
.x { margin-left: 6px; }
.sp-dash { display: flex; align-items: center; height: 34px; padding-left: 12px; flex: none; }
.check { display: block; width: 19px; height: 19px; background: #c8c8c8; border-radius: 3px; }
.tick { fill: none; stroke: #3a3a3a; stroke-width: 2.500; }
.dash-label { margin-left: 9px; color: #e2e2e2; white-space: nowrap; }
.dash-tog { display: flex; width: 124px; height: 34px; margin-left: auto; margin-right: 10px; border: 1px solid #5f5f5f; border-radius: 3px; }
.dt { flex: 1; display: flex; align-items: center; justify-content: center; }
.dt.on { background: #2e2e2e; }
.dti { display: block; width: 46px; height: 22px; }
.dash { fill: none; stroke: #aaa; stroke-width: 2.500; }
.dashw { fill: none; stroke: #fff; stroke-width: 2.800; }
.dash-grid { display: grid; grid-template-columns: repeat(6, 53px); gap: 4px 7px; padding-left: 11px; margin-top: -1px; flex: none; }
.di-box { display: flex; align-items: center; height: 33px; padding-left: 6px; background: #424242; border: 1px solid #4c4c4c; border-radius: 3px; color: #e2e2e2; white-space: nowrap; }
.di-l { text-align: center; line-height: 22px; color: #c0c0c0; }
.mt2 { margin-top: 2px; }
.mt4 { margin-top: 4px; }
.c-arrow { width: 91px; height: 33px; }
.c-gap { margin-left: 12px; }
.lb-arrow { justify-content: center; }
.bar-arrow { width: 44px; }
.off-ic { fill: #6c6c6c; }
.swap-ic { width: 22px; height: 20px; margin-left: 36px; }
.link-ic { width: 24px; height: 26px; margin-left: 35px; }
.off-combo { display: flex; align-items: center; width: 91px; height: 34px; background: #595959; border-radius: 2px; flex: none; }
.off-step { display: flex; justify-content: center; width: 30px; }
.off-s { opacity: .5; }
.off-val { color: #727272; padding-left: 3px; }
.off-seg { display: flex; width: 73px; height: 34px; border: 1px solid #5f5f5f; border-radius: 4px; flex: none; }
.os { flex: 1; display: flex; align-items: center; justify-content: center; border-left: 1px solid #5f5f5f; }
.os:first-child { border-left: 0; }
.al-ic { width: 22px; height: 22px; }
.c-profile { width: 172px; height: 33px; }
.bar-profile { width: 61px; margin: 0 8px 0 10px; }
.lb-profile .blk { position: relative; top: 2px; }
.flip1 { width: 22px; height: 16px; margin-left: 18px; }
.flip2 { width: 18px; height: 24px; margin-left: 20px; }
```
